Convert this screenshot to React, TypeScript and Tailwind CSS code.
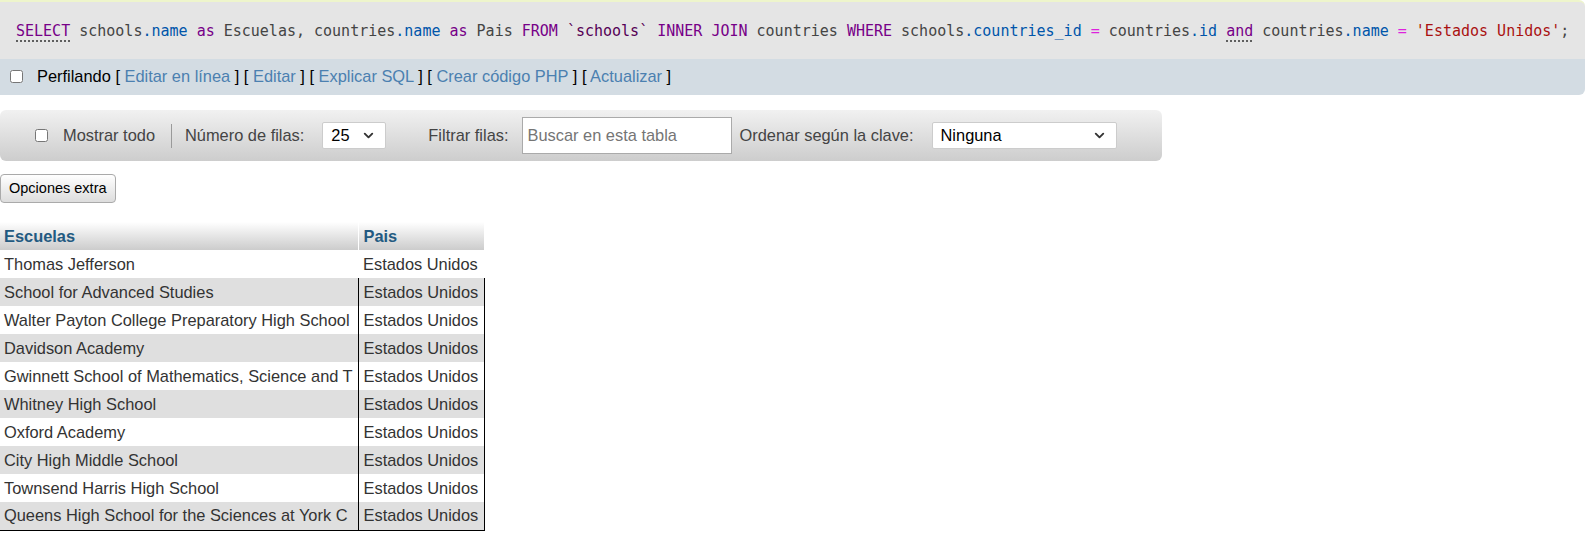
import { ChevronDown } from "lucide-react";

const kw = "text-[#770088]";
const prop = "text-[#0055aa]";
const op = "text-[#dd22dd]";
const str = "text-[#aa1111]";

const schools = [
  "Thomas Jefferson",
  "School for Advanced Studies",
  "Walter Payton College Preparatory High School",
  "Davidson Academy",
  "Gwinnett School of Mathematics, Science and T",
  "Whitney High School",
  "Oxford Academy",
  "City High Middle School",
  "Townsend Harris High School",
  "Queens High School for the Sciences at York C",
];

function Checkbox() {
  return <input type="checkbox" className="h-[13px] w-[13px] m-0" />;
}

function SqlLine() {
  return (
    <code
      className="whitespace-pre text-[15px] text-[#444]"
      style={{ fontFamily: '"DejaVu Sans Mono", monospace' }}
    >
      <span className={`${kw} underline decoration-dotted decoration-[#333] underline-offset-[5px]`}>SELECT</span> schools
      <span className={prop}>.name</span> <span className={kw}>as</span> Escuelas, countries
      <span className={prop}>.name</span> <span className={kw}>as</span> Pais <span className={kw}>FROM</span>{" "}
      <span className="text-[#550055]">`schools`</span> <span className={kw}>INNER</span>{" "}
      <span className={kw}>JOIN</span> countries <span className={kw}>WHERE</span> schools
      <span className={prop}>.countries_id</span> <span className={op}>=</span> countries
      <span className={prop}>.id</span>{" "}
      <span className={`${kw} underline decoration-dotted decoration-[#333] underline-offset-[5px]`}>and</span> countries
      <span className={prop}>.name</span> <span className={op}>=</span>{" "}
      <span className={str}>'Estados Unidos'</span>;
    </code>
  );
}

function Link({ children }: { children: string }) {
  return (
    <>
      <span className="text-black">[ </span>
      <span className="text-[#4b80b0]">{children}</span>
      <span className="text-black"> ]</span>
    </>
  );
}

function FakeSelect({ value, width }: { value: string; width: string }) {
  return (
    <div
      className={`${width} flex h-[27px] items-center justify-between rounded-[2px] border border-[#cccccc] bg-white pl-[8px] pr-[9px] text-black`}
    >
      <span>{value}</span>
      <ChevronDown size={15} strokeWidth={3} className="text-[#333]" />
    </div>
  );
}

export default function App() {
  return (
    <div
      className="min-h-screen bg-white text-[16.4px] text-[#333]"
      style={{ fontFamily: '"Liberation Sans", Arial, sans-serif' }}
    >
      {/* SQL query */}
      <div className="flex h-[59px] items-center rounded-tr-[6px] border-t-2 border-[#eef5cc] bg-[#e5e5e5] pl-[16px] pt-[1px]">
        <SqlLine />
      </div>
      <div className="flex h-[36px] items-center gap-[14px] rounded-br-[6px] bg-[#d3dce3] pl-[10px] pb-[1px]">
        <Checkbox />
        <div className="text-black">
          Perfilando <Link>Editar en línea</Link> <Link>Editar</Link> <Link>Explicar SQL</Link>{" "}
          <Link>Crear código PHP</Link> <Link>Actualizar</Link>
        </div>
      </div>

      {/* toolbar */}
      <div className="mt-[15px] flex h-[51px] w-[1162px] items-center rounded-[6px] bg-gradient-to-b from-[#f1f1f1] to-[#cdcdcd] pl-[35px] text-[#444]">
        <Checkbox />
        <span className="ml-[15px]">Mostrar todo</span>
        <div className="ml-[16px] h-[24px] border-l border-[#9a9a9a]" />
        <span className="ml-[13px]">Número de filas:</span>
        <div className="ml-[18px]">
          <FakeSelect value="25" width="w-[64px]" />
        </div>
        <span className="ml-[42px]">Filtrar filas:</span>
        <div className="ml-[13px] flex h-[37px] w-[210px] items-center border border-[#aaaaaa] bg-white pl-[5px] text-[#757575]">
          Buscar en esta tabla
        </div>
        <span className="ml-[8px]">Ordenar según la clave:</span>
        <div className="ml-[18px]">
          <FakeSelect value="Ninguna" width="w-[185px]" />
        </div>
      </div>

      <div className="mt-[13px]">
        <button className="h-[29px] rounded-[4px] border border-[#aaaaaa] bg-gradient-to-b from-white to-[#dddddd] px-[8px] text-[14.5px] text-black">
          Opciones extra
        </button>
      </div>

      {/* results */}
      <table className="mt-[19px] border-collapse">
        <thead>
          <tr className="h-[28px] bg-gradient-to-b from-white to-[#cccccc]">
            <th className="w-[358px] border-r border-white px-[4px] text-left font-bold text-[#235a81]">Escuelas</th>
            <th className="w-[126px] px-[5px] text-left font-bold text-[#235a81]">Pais</th>
          </tr>
        </thead>
        <tbody>
          {schools.map((s, i) => {
            const last = i === schools.length - 1;
            return (
              <tr key={s} className={`h-[28px] ${i % 2 === 1 ? "bg-[#dfdfdf]" : "bg-white"}`}>
                <td className={`whitespace-nowrap px-[4px] ${last ? "border-b border-black" : ""}`}>{s}</td>
                <td
                  className={`whitespace-nowrap px-[5px] ${i > 0 ? "border-x border-black" : ""} ${
                    last ? "border-b border-black" : ""
                  }`}
                >
                  Estados Unidos
                </td>
              </tr>
            );
          })}
        </tbody>
      </table>
    </div>
  );
}
